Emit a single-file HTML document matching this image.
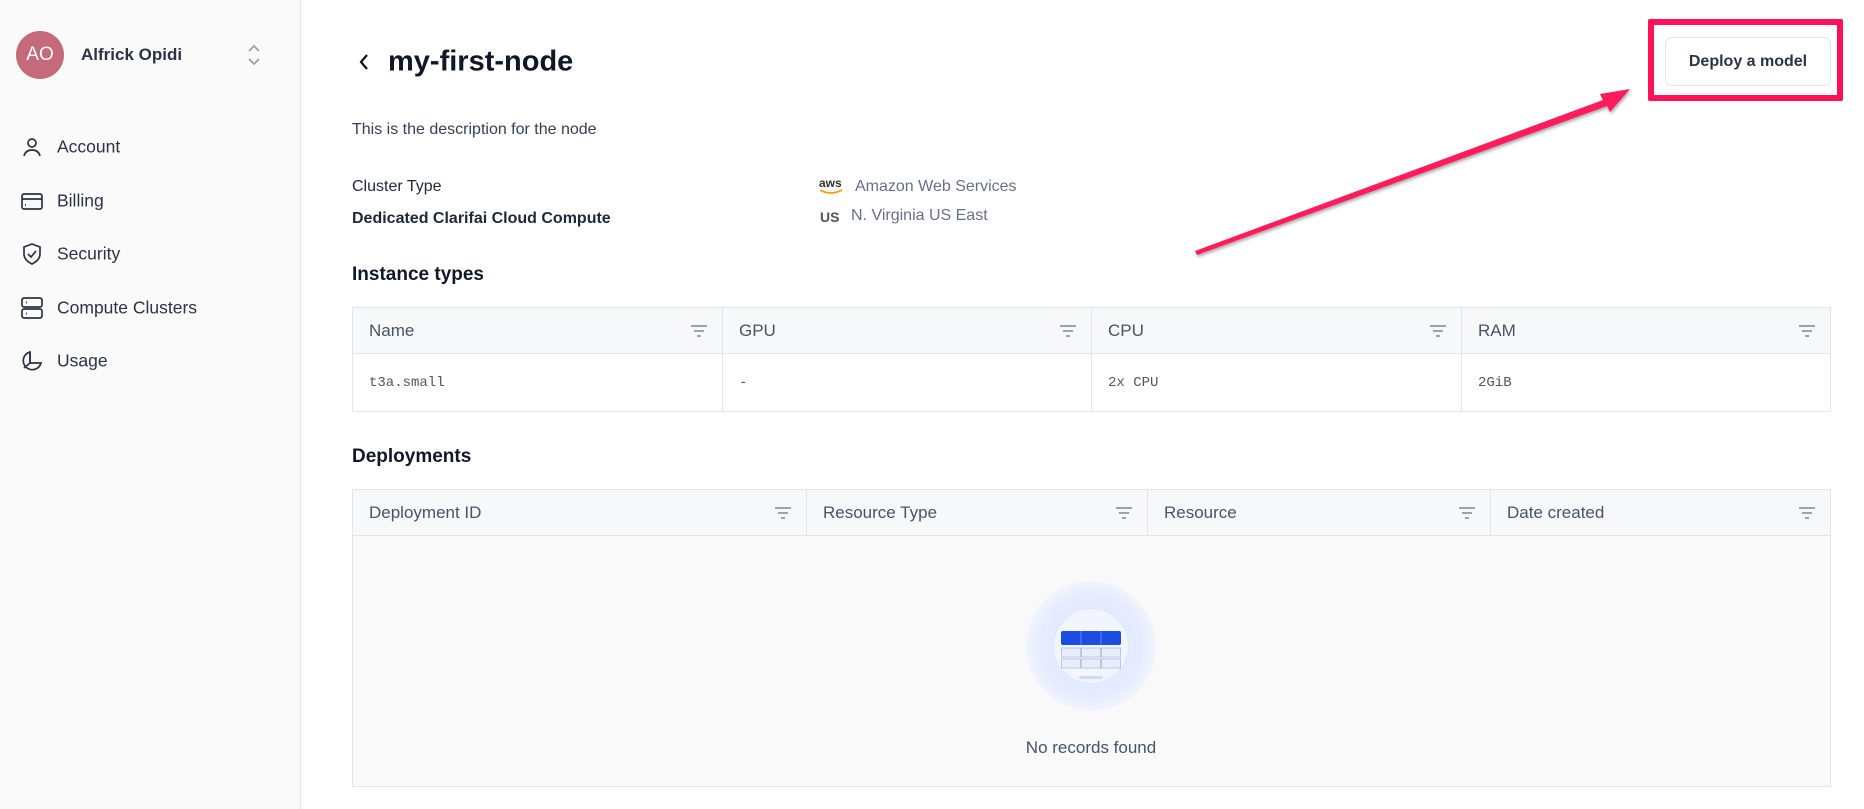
<!DOCTYPE html>
<html><head><meta charset="utf-8"><style>
*{box-sizing:border-box;margin:0;padding:0}
body{width:1864px;height:809px;overflow:hidden;background:#fff;font-family:"Liberation Sans",sans-serif;color:#1d2939;position:relative}
.side{position:absolute;left:0;top:0;width:301px;height:809px;background:#fafafa;border-right:1px solid #e8e8ea}
.abs{position:absolute}
.nav{position:absolute;left:57px;font-size:17.5px;color:#2b3445;transform:translateY(-50%)}
.ico{position:absolute;left:20px;width:24px;height:24px;transform:translateY(-50%)}
.t{position:absolute;transform:translateY(-50%);white-space:nowrap}
table{position:absolute;border-collapse:collapse;font-size:17px}
td,th{border:1px solid #e3e5e8;text-align:left;font-weight:normal;color:#475467;padding:0 16px;position:relative}
th{background:#f7f8fa;height:46px}
.f{position:absolute;right:14px;top:50%;transform:translateY(-50%)}
.mono{font-family:"Liberation Mono",monospace;font-size:14px;color:#555}
</style></head><body>
<div class="side">
 <div class="abs" style="left:16px;top:31px;width:48px;height:48px;border-radius:50%;background:#c56a7b;color:#fff;font-size:19px;line-height:48px;text-align:center">AO</div>
 <div class="t" style="left:81px;top:55px;font-size:17px;font-weight:bold;color:#2b3445">Alfrick Opidi</div>
 <svg class="abs" style="left:247px;top:44px" width="14" height="22" viewBox="0 0 14 22" fill="none" stroke="#98a2b3" stroke-width="1.8"><path d="M2 7l5-5 5 5M2 15l5 5 5-5"/></svg>
 <svg class="ico" style="top:147px" viewBox="0 0 24 24" fill="none" stroke="#2b3445" stroke-width="1.7"><circle cx="12" cy="8" r="4"/><path d="M4 21c1-4 4-6 8-6s7 2 8 6"/></svg>
 <div class="nav" style="top:147px">Account</div>
 <svg class="ico" style="top:201px" viewBox="0 0 24 24" fill="none" stroke="#2b3445" stroke-width="1.7"><rect x="2" y="5" width="20" height="15" rx="2"/><path d="M2 10h20M5 16h1"/></svg>
 <div class="nav" style="top:201px">Billing</div>
 <svg class="ico" style="top:254px" viewBox="0 0 24 24" fill="none" stroke="#2b3445" stroke-width="1.7"><path d="M12 2l8 3v7c0 5-4 8-8 10-4-2-8-5-8-10V5z"/><path d="M8 12l3 3 5-6"/></svg>
 <div class="nav" style="top:254px">Security</div>
 <svg class="ico" style="top:308px" viewBox="0 0 24 24" fill="none" stroke="#2b3445" stroke-width="1.7"><rect x="2" y="2" width="20" height="9" rx="2"/><rect x="2" y="13" width="20" height="9" rx="2"/><path d="M6 6.5h1M6 17.5h1"/></svg>
 <div class="nav" style="top:308px">Compute Clusters</div>
 <svg class="ico" style="top:361px" viewBox="0 0 24 24" fill="none" stroke="#2b3445" stroke-width="1.7"><path d="M10 3a9 9 0 1 0 11 11H10z"/><path d="M10 3v11l-6 5"/></svg>
 <div class="nav" style="top:361px">Usage</div>
</div>

<svg class="abs" style="left:358px;top:53px" width="12" height="18" viewBox="0 0 12 18" fill="none" stroke="#111" stroke-width="2.2"><path d="M9 2L3 9l6 7"/></svg>
<div class="t" style="left:388px;top:62px;font-size:29px;font-weight:bold;color:#101828">my-first-node</div>
<div class="t" style="left:352px;top:130px;font-size:16px;color:#344054">This is the description for the node</div>
<div class="t" style="left:352px;top:187px;font-size:16px;color:#1d2939">Cluster Type</div>
<div class="t" style="left:352px;top:219px;font-size:16px;font-weight:bold;color:#1d2939">Dedicated Clarifai Cloud Compute</div>
<div class="t" style="left:819px;top:183px;font-size:12px;font-weight:bold;color:#333">aws</div>
<svg class="abs" style="left:819px;top:189px" width="26" height="6" viewBox="0 0 26 6"><path d="M1 1q11 6 22 0" stroke="#f90" stroke-width="1.8" fill="none"/></svg>
<div class="t" style="left:855px;top:187px;font-size:16px;color:#667085">Amazon Web Services</div>
<div class="t" style="left:820px;top:217px;font-size:14px;font-weight:bold;color:#555">US</div>
<div class="t" style="left:851px;top:216px;font-size:16px;color:#667085">N. Virginia US East</div>
<div class="t" style="left:352px;top:275px;font-size:19px;font-weight:bold;color:#101828">Instance types</div>

<table style="left:352px;top:307px;width:1479px">
<tr><th style="width:370px">Name<svg class="f" width="18" height="14" viewBox="0 0 18 14" stroke="#98a2b3" stroke-width="2"><path d="M1 2h16M4 7h10M7 12h4"/></svg></th><th style="width:369px">GPU<svg class="f" width="18" height="14" viewBox="0 0 18 14" stroke="#98a2b3" stroke-width="2"><path d="M1 2h16M4 7h10M7 12h4"/></svg></th><th style="width:370px">CPU<svg class="f" width="18" height="14" viewBox="0 0 18 14" stroke="#98a2b3" stroke-width="2"><path d="M1 2h16M4 7h10M7 12h4"/></svg></th><th>RAM<svg class="f" width="18" height="14" viewBox="0 0 18 14" stroke="#98a2b3" stroke-width="2"><path d="M1 2h16M4 7h10M7 12h4"/></svg></th></tr>
<tr style="height:58px"><td class="mono">t3a.small</td><td class="mono">-</td><td class="mono">2x CPU</td><td class="mono">2GiB</td></tr>
</table>

<div class="t" style="left:352px;top:457px;font-size:19px;font-weight:bold;color:#101828">Deployments</div>
<table style="left:352px;top:489px;width:1479px">
<tr><th style="width:454px">Deployment ID<svg class="f" width="18" height="14" viewBox="0 0 18 14" stroke="#98a2b3" stroke-width="2"><path d="M1 2h16M4 7h10M7 12h4"/></svg></th><th style="width:341px">Resource Type<svg class="f" width="18" height="14" viewBox="0 0 18 14" stroke="#98a2b3" stroke-width="2"><path d="M1 2h16M4 7h10M7 12h4"/></svg></th><th style="width:343px">Resource<svg class="f" width="18" height="14" viewBox="0 0 18 14" stroke="#98a2b3" stroke-width="2"><path d="M1 2h16M4 7h10M7 12h4"/></svg></th><th>Date created<svg class="f" width="18" height="14" viewBox="0 0 18 14" stroke="#98a2b3" stroke-width="2"><path d="M1 2h16M4 7h10M7 12h4"/></svg></th></tr>
<tr style="height:251px"><td colspan="4" style="background:#f9f9f9"></td></tr>
</table>
<div class="abs" style="left:1026px;top:581px;width:130px;height:130px;border-radius:50%;background:radial-gradient(circle,#dfe6ff 0%,#e6ecff 55%,rgba(240,244,255,0.6) 75%,rgba(249,249,249,0) 100%)"></div>
<div class="abs" style="left:1053px;top:608px;width:76px;height:76px;border-radius:50%;background:#f2f5fd;border:1px solid #dfe6fb"></div>
<svg class="abs" style="left:1061px;top:631px" width="60" height="50" viewBox="0 0 60 50"><rect x="0" y="0" width="60" height="14" rx="2" fill="#1a4de0"/><path d="M20 0v14M40 0v14" stroke="#5a80ff"/><g fill="#e8edfa" stroke="#b9c6e6"><rect x="0.5" y="17" width="19" height="9"/><rect x="20.5" y="17" width="19" height="9"/><rect x="40.5" y="17" width="19" height="9"/><rect x="0.5" y="28" width="19" height="9"/><rect x="20.5" y="28" width="19" height="9"/><rect x="40.5" y="28" width="19" height="9"/></g><rect x="18" y="45" width="24" height="3" rx="1.5" fill="#d3dbef"/></svg>
<div class="t" style="left:1091px;top:748px;font-size:17px;color:#475467;transform:translate(-50%,-50%)">No records found</div>

<div class="abs" style="left:1648px;top:19px;width:195px;height:82px;border:6px solid #ff1158;border-radius:2px"></div>
<div class="abs" style="left:1665px;top:37px;width:166px;height:49px;border:1px solid #e4e7ec;border-radius:7px;background:#fff;font-size:16px;font-weight:bold;color:#2b3445;text-align:center;line-height:47px">Deploy a model</div>
<svg class="abs" style="left:0;top:0" width="1864" height="809"><defs><filter id="s"><feDropShadow dx="1" dy="2" stdDeviation="1.5" flood-opacity="0.35"/></filter></defs><path d="M1195 251L1197 255L1607 106L1610 112L1630 89L1600 94L1603 100Z" fill="#ff1a5c" filter="url(#s)"/></svg>
</body></html>
